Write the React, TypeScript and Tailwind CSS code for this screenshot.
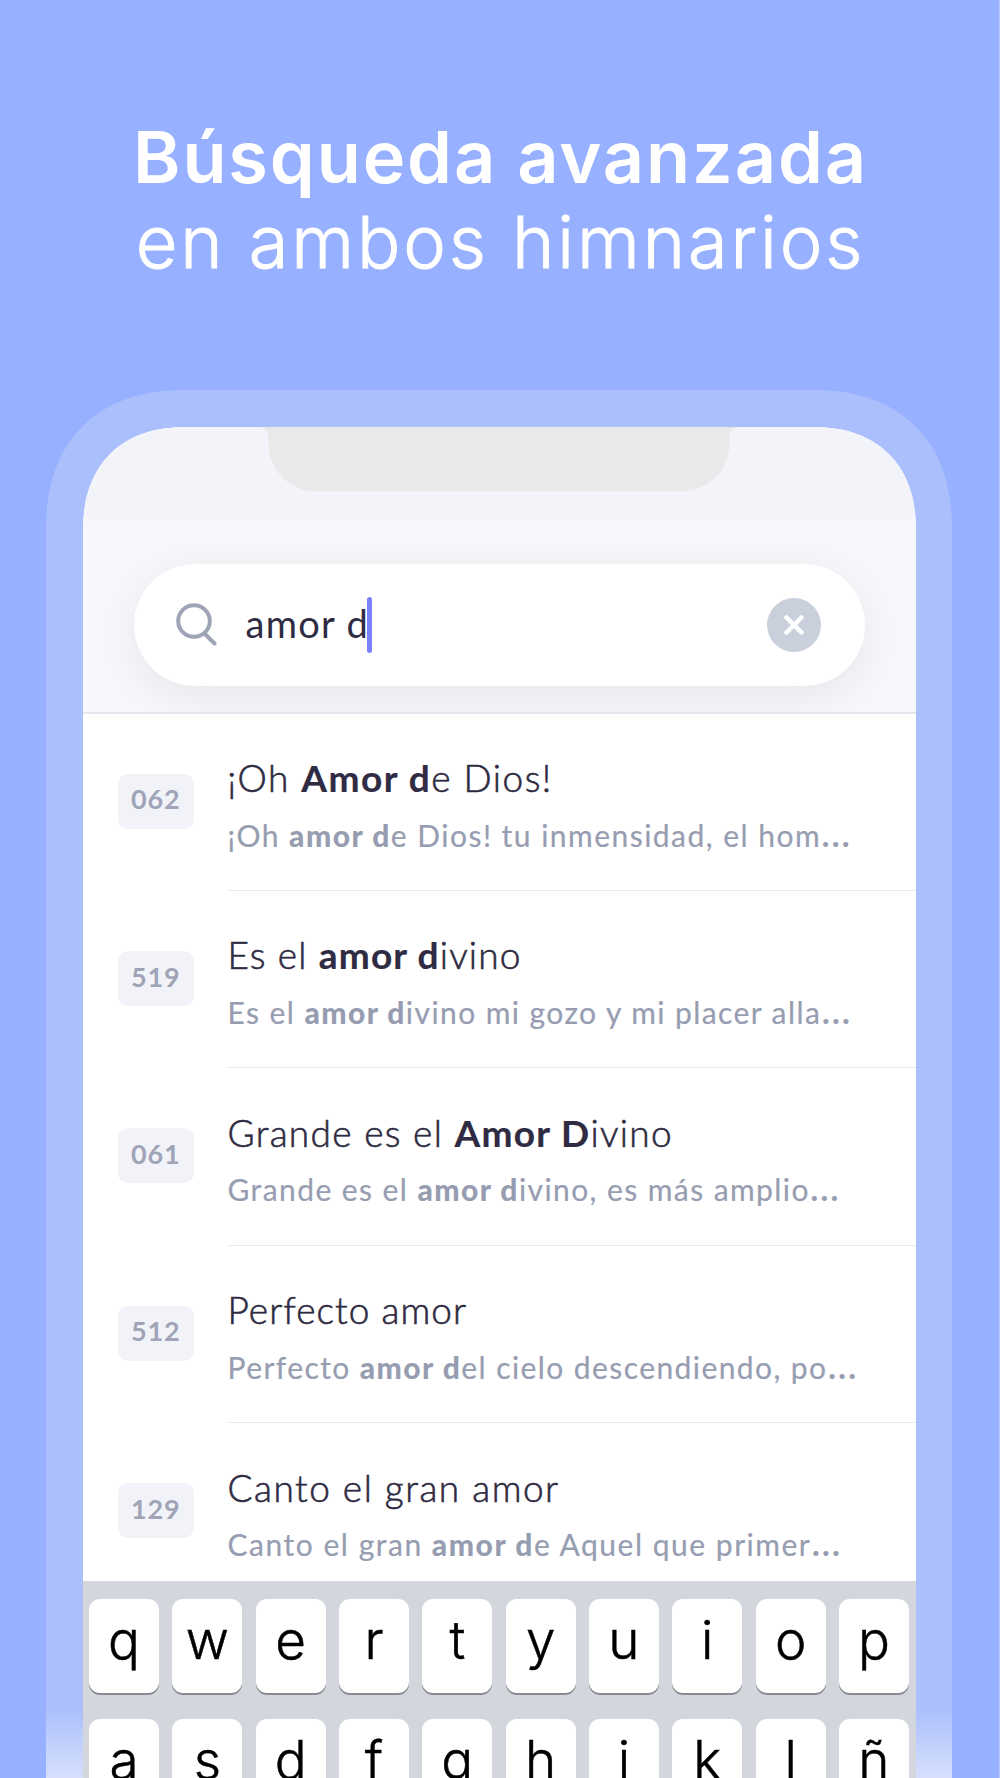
type Run = { text: string; bold?: boolean };

type Hymn = {
  number: string;
  title: Run[];
  excerpt: Run[];
  titleClass: string;
  excerptClass: string;
};

const hymns: Hymn[] = [
  {
    number: "062",
    title: [{ text: "¡Oh " }, { text: "Amor d", bold: true }, { text: "e Dios!" }],
    excerpt: [{ text: "¡Oh " }, { text: "amor d", bold: true }, { text: "e Dios! tu inmensidad, el hom" }],
    titleClass: "tracking-[1.5px]",
    excerptClass: "tracking-[1.47px]",
  },
  {
    number: "519",
    title: [{ text: "Es el " }, { text: "amor d", bold: true }, { text: "ivino" }],
    excerpt: [{ text: "Es el " }, { text: "amor d", bold: true }, { text: "ivino mi gozo y mi placer alla" }],
    titleClass: "tracking-[1.15px]",
    excerptClass: "tracking-[1.42px]",
  },
  {
    number: "061",
    title: [{ text: "Grande es el " }, { text: "Amor D", bold: true }, { text: "ivino" }],
    excerpt: [{ text: "Grande es el " }, { text: "amor d", bold: true }, { text: "ivino, es más amplio" }],
    titleClass: "tracking-[1.3px]",
    excerptClass: "tracking-[1.42px]",
  },
  {
    number: "512",
    title: [{ text: "Perfecto amor" }],
    excerpt: [{ text: "Perfecto " }, { text: "amor d", bold: true }, { text: "el cielo descendiendo, po" }],
    titleClass: "tracking-[1.05px]",
    excerptClass: "tracking-[1.42px]",
  },
  {
    number: "129",
    title: [{ text: "Canto el gran amor" }],
    excerpt: [{ text: "Canto el gran " }, { text: "amor d", bold: true }, { text: "e Aquel que primer" }],
    titleClass: "tracking-[1.5px]",
    excerptClass: "tracking-[1.52px]",
  },
];

const keyRows = ["qwertyuiop", "asdfghjklñ"];

function Runs({ runs, boldClass }: { runs: Run[]; boldClass: string }) {
  return (
    <>
      {runs.map((run, i) =>
        run.bold ? (
          <b key={i} className={boldClass}>
            {run.text}
          </b>
        ) : (
          <span key={i}>{run.text}</span>
        )
      )}
    </>
  );
}

function StatusBar() {
  return (
    <div className="flex h-[92px] shrink-0 justify-center bg-[#f3f4f9]">
      <svg width="482" height="65" viewBox="0 0 482 65" className="block">
        <path
          d="M0 0H482C475 0 471.500 4 471.500 10V16C471.500 44 450 64.500 422 64.500H60C32 64.500 10.500 44 10.500 16V10C10.500 4 7 0 0 0Z"
          fill="#e9e9e9"
        />
      </svg>
    </div>
  );
}

function SearchHeader() {
  return (
    <div className="h-[195px] shrink-0 overflow-hidden border-b-2 border-[#e4e6ee] bg-[#f7f8fc] px-[51px] pt-[45px]">
      <div className="flex h-[122px] items-center rounded-full bg-white pr-[44px] pl-[42px] shadow-[0_10px_48px_rgba(0,0,0,0.075)]">
        <svg width="41" height="43" viewBox="0 0 41 43" fill="none" stroke="#9fa5b7" strokeWidth="4" strokeLinecap="round">
          <circle cx="18" cy="18" r="15.800" />
          <path d="M29 31L38.500 40.500" />
        </svg>
        <div className="ml-[29px] pb-[4px] text-[38px] leading-[54px] tracking-[1.3px] text-[#2f2b42]">amor d</div>
        <div className="-ml-[2px] h-[56px] w-[5px] rounded-full bg-[#7b82ff]" />
        <div className="ml-auto flex size-[54px] items-center justify-center rounded-full bg-[#c9cfdb]">
          <svg width="20" height="20" viewBox="0 0 20 20" stroke="#fff" strokeWidth="4.500" strokeLinecap="round">
            <path d="M2.500 2.500L17.500 17.500M17.500 2.500L2.500 17.500" />
          </svg>
        </div>
      </div>
    </div>
  );
}

function HymnRow({ hymn }: { hymn: Hymn }) {
  return (
    <div className="flex h-[177.400px] shrink-0 pl-[35.500px]">
      <div className="mt-[60px] flex h-[55px] w-[75.500px] shrink-0 items-center justify-center rounded-[10px] bg-[#f2f3f8] pb-[3px] text-[27px] font-bold tracking-[0.8px] text-[#9fa5b7]">
        {hymn.number}
      </div>
      <div className="ml-[34px] flex-1 border-b-[1.500px] border-[#e6e9ee] pt-[40.500px] whitespace-nowrap">
        <div
          className={`text-[37px] leading-[48px] font-light text-[#2f2b42] [-webkit-text-stroke:0.6px] ${hymn.titleClass}`}
        >
          <Runs runs={hymn.title} boldClass="font-bold [-webkit-text-stroke:0.2px]" />
        </div>
        <div
          className={`mt-[10.500px] text-[30px] leading-[40px] text-[#979db1] [-webkit-text-stroke:0.2px] ${hymn.excerptClass}`}
        >
          <Runs runs={hymn.excerpt} boldClass="font-black [-webkit-text-stroke:0]" />
          <span className="text-[39px] leading-none">…</span>
        </div>
      </div>
    </div>
  );
}

function Keyboard() {
  return (
    <div className="flex h-[197px] shrink-0 flex-col gap-[26px] overflow-hidden bg-[#d3d6dc] px-[6.500px] pt-[18px] font-[Inter,sans-serif]">
      {keyRows.map((row) => (
        <div key={row} className="flex shrink-0 justify-between">
          {row.split("").map((letter) => (
            <div
              key={letter}
              className="h-[94px] w-[70px] rounded-[11px] bg-white text-center text-[53px] leading-[83px] font-light text-black shadow-[0_2px_0_#898b8f] [-webkit-text-stroke:0.5px]"
            >
              {letter}
            </div>
          ))}
        </div>
      ))}
    </div>
  );
}

export default function App() {
  return (
    <div className="h-[1778px] w-[1000px] overflow-hidden border-r border-[#b9c9ff] bg-[#97b0ff] font-[Lato,sans-serif]">
      <h1 className="h-[390px] pt-[114px] pl-[2px] text-center font-[Inter,sans-serif] text-[72px] leading-[85px] whitespace-nowrap text-white">
        <div className="font-semibold tracking-[1.9px]">Búsqueda avanzada</div>
        <div className="font-light tracking-[2.9px] [-webkit-text-stroke:1px]">en ambos himnarios</div>
      </h1>
      <div className="ml-[46px] h-[1388px] w-[906px] rounded-t-[140px] bg-linear-to-b from-[#abbffc] from-95% to-[#d6dffd] px-[36.500px] pt-[36.500px] [corner-shape:superellipse(1.2)]">
        <div className="flex h-full flex-col overflow-hidden rounded-t-[104px] bg-white [corner-shape:superellipse(1.2)]">
          <StatusBar />
          <SearchHeader />
          <div className="h-[867.500px] shrink-0 overflow-hidden">
            {hymns.map((hymn) => (
              <HymnRow key={hymn.number} hymn={hymn} />
            ))}
          </div>
          <Keyboard />
        </div>
      </div>
    </div>
  );
}
